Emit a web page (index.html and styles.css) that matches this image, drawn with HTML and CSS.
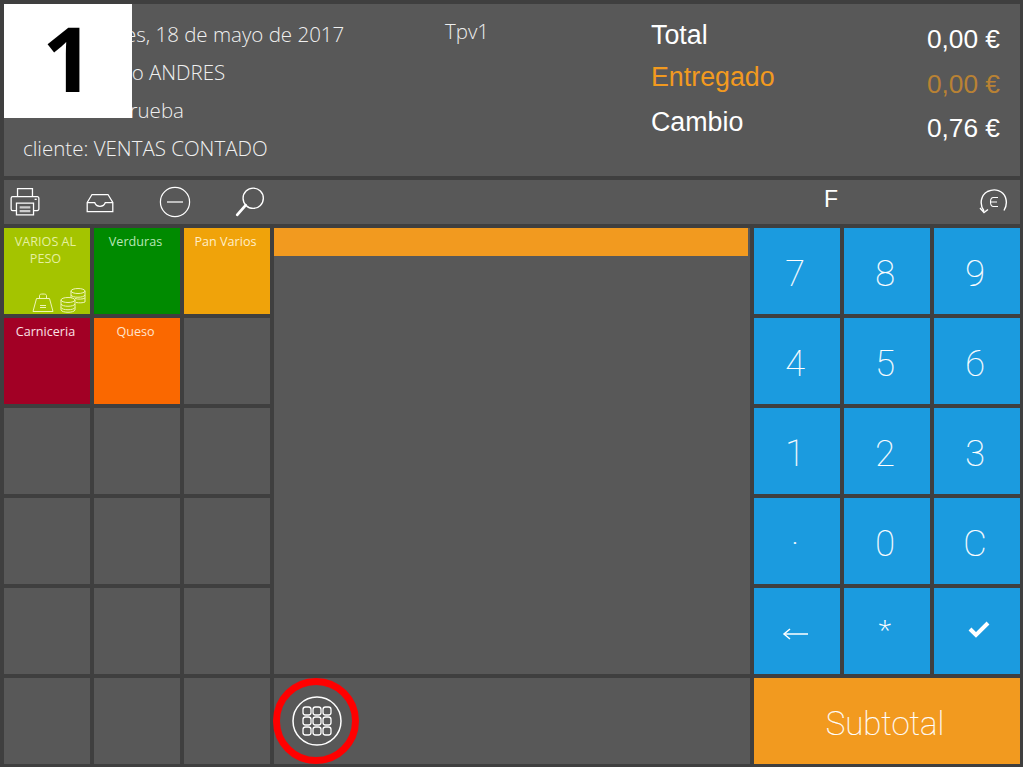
FILE: index.html
```html
<!DOCTYPE html>
<html lang="es">
<head>
<meta charset="utf-8">
<title>TPV</title>
<link rel="stylesheet" href="styles.css">
</head>
<body>
<main class="app">
  <header class="header">
    <div class="info">
      <div class="info-line">Fecha: jueves, 18 de mayo de 2017</div>
      <div class="info-line">Usuario: Rico ANDRES</div>
      <div class="info-line">Almacén : Prueba</div>
      <div class="info-line">cliente: VENTAS CONTADO</div>
    </div>
    <div class="terminal">Tpv1</div>
    <div class="labels">
      <div class="label label-total">Total</div>
      <div class="label label-given">Entregado</div>
      <div class="label label-change">Cambio</div>
    </div>
    <div class="values">
      <div class="value">0,00 €</div>
      <div class="value value-given">0,00 €</div>
      <div class="value">0,76 €</div>
    </div>
  </header>

  <nav class="toolbar">
    <div class="tools">
      <svg class="tool" viewBox="0 0 30 30" fill="none" stroke="#fff" stroke-width="1.2"><path d="M8 10V2.500h14V10"/><path d="M7 23H3.500A1.500 1.500 0 0 1 2 21.500V11.500A1.500 1.500 0 0 1 3.500 10h23A1.500 1.500 0 0 1 28 11.500v10a1.500 1.500 0 0 1-1.500 1.500H23"/><path d="M7 16h16v11H7z"/><path d="M10 20h10M10 23.500h10" stroke-width="2" stroke="#ccc"/><path d="M24 12.500h2"/></svg>
      <svg class="tool" viewBox="0 0 30 30" fill="none" stroke="#fff" stroke-width="1.200"><path d="M3 15.500 7.500 8h15l4.500 7.500v8.500H3z"/><path d="M3 15.500h7c1 3 2.500 3.500 5 3.500s4-.5 5-3.500h7"/></svg>
      <svg class="tool" viewBox="0 0 34 34" fill="none" stroke="#fff"><circle cx="17" cy="17" r="15.500" stroke-width="1.300"/><path d="M8.500 17h17" stroke-width="1.300"/></svg>
      <svg class="tool" viewBox="0 0 30 30" fill="none" stroke="#fff"><circle cx="18" cy="11.500" r="9.500" stroke-width="1.300"/><path d="M11 18 3 27" stroke-width="2.600" stroke-linecap="round"/></svg>
    </div>
    <div class="mode">F</div>
    <svg class="refund" viewBox="0 0 30 30" fill="none" stroke="#fff"><path d="M6 24C1 17 3 8 9.500 4.500c7.500-3.500 15.500-1 18 6 1.500 4.500 1 9-1.500 13" stroke-width="1.400"/><path d="M2 21l4 4.500 4-3" stroke-width="1.400"/><path d="M20 10.500h-4.500c-2 0-3 2-3 4.500s1 4.500 3 4.500H20M12.500 15H19" stroke-width="1.100"/></svg>
  </nav>

  <section class="tile tile-lime tile-c1 tile-r1">
    <span class="tile-name">VARIOS AL PESO</span>
    <span class="tile-icons">
      <svg class="icon-weight" viewBox="0 0 22 20" fill="none" stroke="#eef5b8" stroke-width="1"><path d="M7.500 5.500V2.500C7.500 1.500 8.500 1 11 1s3.500.5 3.500 1.500v3"/><path d="M4.500 5.500h13l3.500 13H1z"/><path d="M8 12.500h6M8 14.500h6"/></svg>
      <svg class="icon-coins" viewBox="0 0 26 26" fill="none" stroke="#eef5b8" stroke-width="1"><ellipse cx="18" cy="4" rx="7" ry="2.500"/><path d="M11 4v7M25 4v11M11 8c1 3 13 3 14 0M15 11.500c3 1 8 .8 10-.5M16 15.500c3 .5 7 .5 9-.5"/><ellipse cx="8" cy="13" rx="7" ry="2.500"/><path d="M1 13v10c1 3 13 3 14 0V13M1 17c1 3 13 3 14 0M1 20.500c1 3 13 3 14 0"/></svg>
    </span>
  </section>
  <section class="tile tile-green tile-c2 tile-r1"><span class="tile-name">Verduras</span></section>
  <section class="tile tile-amber tile-c3 tile-r1"><span class="tile-name">Pan Varios</span></section>
  <section class="tile tile-wine tile-c1 tile-r2"><span class="tile-name">Carniceria</span></section>
  <section class="tile tile-orange tile-c2 tile-r2"><span class="tile-name">Queso</span></section>
  <section class="tile tile-c3 tile-r2"></section>
  <section class="tile tile-c1 tile-r3"></section>
  <section class="tile tile-c2 tile-r3"></section>
  <section class="tile tile-c3 tile-r3"></section>
  <section class="tile tile-c1 tile-r4"></section>
  <section class="tile tile-c2 tile-r4"></section>
  <section class="tile tile-c3 tile-r4"></section>
  <section class="tile tile-c1 tile-r5"></section>
  <section class="tile tile-c2 tile-r5"></section>
  <section class="tile tile-c3 tile-r5"></section>
  <section class="tile tile-c1 tile-r6"></section>
  <section class="tile tile-c2 tile-r6"></section>
  <section class="tile tile-c3 tile-r6"></section>

  <section class="ticket"><div class="ticket-head"></div></section>

  <section class="ticket-foot">
    <svg class="grid-button" viewBox="0 0 50 50" fill="none" stroke="#fff">
      <circle cx="25" cy="25" r="24" stroke-width="1.500"/>
      <g stroke-width="1.300">
        <rect x="11" y="11" width="8" height="8" rx="2.500"/><rect x="21" y="11" width="8" height="8" rx="2.500"/><rect x="31" y="11" width="8" height="8" rx="2.500"/>
        <rect x="11" y="21" width="8" height="8" rx="2.500"/><rect x="21" y="21" width="8" height="8" rx="2.500"/><rect x="31" y="21" width="8" height="8" rx="2.500"/>
        <rect x="11" y="31" width="8" height="8" rx="2.500"/><rect x="21" y="31" width="8" height="8" rx="2.500"/><rect x="31" y="31" width="8" height="8" rx="2.500"/>
      </g>
    </svg>
    <div class="ring"></div>
  </section>

  <button class="key key-c1 tile-r1">7</button>
  <button class="key key-c2 tile-r1">8</button>
  <button class="key key-c3 tile-r1">9</button>
  <button class="key key-c1 tile-r2">4</button>
  <button class="key key-c2 tile-r2">5</button>
  <button class="key key-c3 tile-r2">6</button>
  <button class="key key-c1 tile-r3">1</button>
  <button class="key key-c2 tile-r3">2</button>
  <button class="key key-c3 tile-r3">3</button>
  <button class="key key-c1 tile-r4">·</button>
  <button class="key key-c2 tile-r4">0</button>
  <button class="key key-c3 tile-r4">C</button>
  <button class="key key-c1 tile-r5 key-glyph">
    <svg class="key-arrow" viewBox="0 0 26 14" fill="none" stroke="#fff"><path d="M26 7H2" stroke-width="1.500"/><path d="M8 2 2 7l6 5" stroke-width="1.500"/></svg>
  </button>
  <button class="key key-c2 tile-r5 key-glyph"><span class="key-star">*</span></button>
  <button class="key key-c3 tile-r5 key-action">
    <svg class="key-check" viewBox="0 0 22 18" fill="none" stroke="#fff" stroke-width="4"><path d="m2 9 6 6L20 3"/></svg>
  </button>
  <button class="subtotal">Subtotal</button>

  <div class="badge">1</div>
</main>
</body>
</html>
```
FILE: styles.css
```css
* { box-sizing: border-box; }
html, body { margin: 0; height: 100%; }
body { background: #3f3f3f; overflow: hidden; }

.app {
  position: relative;
  width: 1023px;
  height: 767px;
  padding: 4px 3px 3px 4px;
  display: grid;
  grid-template-columns: 86px 86px 86px 476px 86px 86px 86px;
  grid-template-rows: 172px 44px repeat(6, 86px);
  gap: 4px;
  font-family: "Open Sans", "Liberation Sans", sans-serif;
  color: #fff;
}

.header {
  grid-column: 1 / -1;
  grid-row: 1;
  background: #585858;
  display: flex;
  padding: 11px 20px 0 19px;
}
.info { width: 422px; font-weight: 300; font-size: 20.500px; color: #f0f0f0; }
.info-line { height: 38px; line-height: 38px; white-space: nowrap; }
.terminal { width: 206px; height: 38px; line-height: 32px; font-weight: 300; font-size: 20.500px; color: #eee; }
.labels { flex: 1; font-family: "Liberation Sans", Arial, sans-serif; font-size: 26.800px; padding-top: 1px; }
.label { line-height: 30px; }
.label-total { margin-top: 4px; }
.label-given { margin-top: 12px; color: #f29a1f; }
.label-change { margin-top: 15px; }
.values { text-align: right; font-family: "Liberation Sans", Arial, sans-serif; font-size: 26.300px; margin-top: 9px; }
.value { line-height: 30px; margin-bottom: 15px; }
.value-given { color: #b98234; margin-bottom: 14px; }

.toolbar {
  grid-column: 1 / -1;
  grid-row: 2;
  background: #585858;
  display: flex;
  align-items: center;
}
.tools { display: flex; align-items: center; padding-left: 5px; width: 820px; }
.tool { width: 32px; height: 32px; margin-right: 43px; flex: none; }
.mode { width: 14px; font-family: "Liberation Sans", Arial, sans-serif; font-size: 23px; line-height: 1; margin-bottom: 5px; }
.refund { width: 30px; height: 30px; margin-left: 140px; flex: none; }

.tile {
  background: #585858;
  display: flex;
  flex-direction: column;
  padding: 5px 7px 0 4px;
  font-size: 12.600px;
  line-height: 17px;
  text-align: center;
  min-width: 0;
}
.tile-name { display: block; }
.tile-c1 { grid-column: 1; }
.tile-c2 { grid-column: 2; }
.tile-c3 { grid-column: 3; }
.tile-r1 { grid-row: 3; }
.tile-r2 { grid-row: 4; }
.tile-r3 { grid-row: 5; }
.tile-r4 { grid-row: 6; }
.tile-r5 { grid-row: 7; }
.tile-r6 { grid-row: 8; }
.tile-lime { background: #a4c400; color: #e6f0a0; }
.tile-green { background: #008a00; color: #b8e6b8; }
.tile-amber { background: #f0a30a; color: #ffeec8; }
.tile-wine { background: #a20025; color: #fbe0e6; }
.tile-orange { background: #fa6800; color: #ffe3cc; }
.tile-icons { margin-top: auto; display: flex; justify-content: flex-end; align-items: flex-end; gap: 6px; margin-right: -3px; padding-bottom: 1px; }
.icon-weight { width: 22px; height: 20px; }
.icon-coins { width: 26px; height: 26px; }

.ticket { grid-column: 4; grid-row: 3 / 8; background: #585858; }
.ticket-head { height: 28px; width: 474px; background: #f29a1f; }
.ticket-foot {
  position: relative;
  grid-column: 4;
  grid-row: 8;
  background: #585858;
  display: flex;
  align-items: center;
  padding-left: 18px;
}
.grid-button { width: 50px; height: 50px; }
.ring {
  position: absolute;
  left: -1px;
  top: 0;
  width: 86px;
  height: 86px;
  border: 7px solid #f00;
  border-radius: 50%;
}

.key {
  border: 0;
  padding: 6px 4px 0 0;
  background: #1b9bdf;
  color: #fff;
  font-family: Roboto, "Open Sans", sans-serif;
  font-weight: 100;
  font-size: 36px;
  -webkit-text-stroke: 0.2px #fff;
  display: flex;
  align-items: center;
  justify-content: center;
}
.key-c1 { grid-column: 5; }
.key-c2 { grid-column: 6; }
.key-c3 { grid-column: 7; }
.key-glyph { padding: 0 4px 0 0; }
.key-action { padding: 0 0 0 4px; }
.key-arrow { width: 26px; height: 14px; margin-top: 6px; }
.key-star { font-family: "Open Sans", sans-serif; font-weight: 300; font-size: 26px; line-height: 1; margin-top: -4px; -webkit-text-stroke: 0; }
.key-check { width: 22px; height: 18px; margin-top: -4px; }
.subtotal {
  grid-column: 5 / 8;
  grid-row: 8;
  border: 0;
  padding: 4px 4px 0 0;
  background: #f29a1f;
  color: #fff;
  font-family: Roboto, "Open Sans", sans-serif;
  font-weight: 100;
  font-size: 33px;
  -webkit-text-stroke: 0.2px #fff;
}

.badge {
  position: absolute;
  left: 4px;
  top: 4px;
  width: 128px;
  height: 114px;
  background: #fff;
  color: #000;
  font-family: "Open Sans", "Liberation Sans", sans-serif;
  font-weight: 700;
  font-size: 90px;
  line-height: 106px;
  text-align: center;
}
```
